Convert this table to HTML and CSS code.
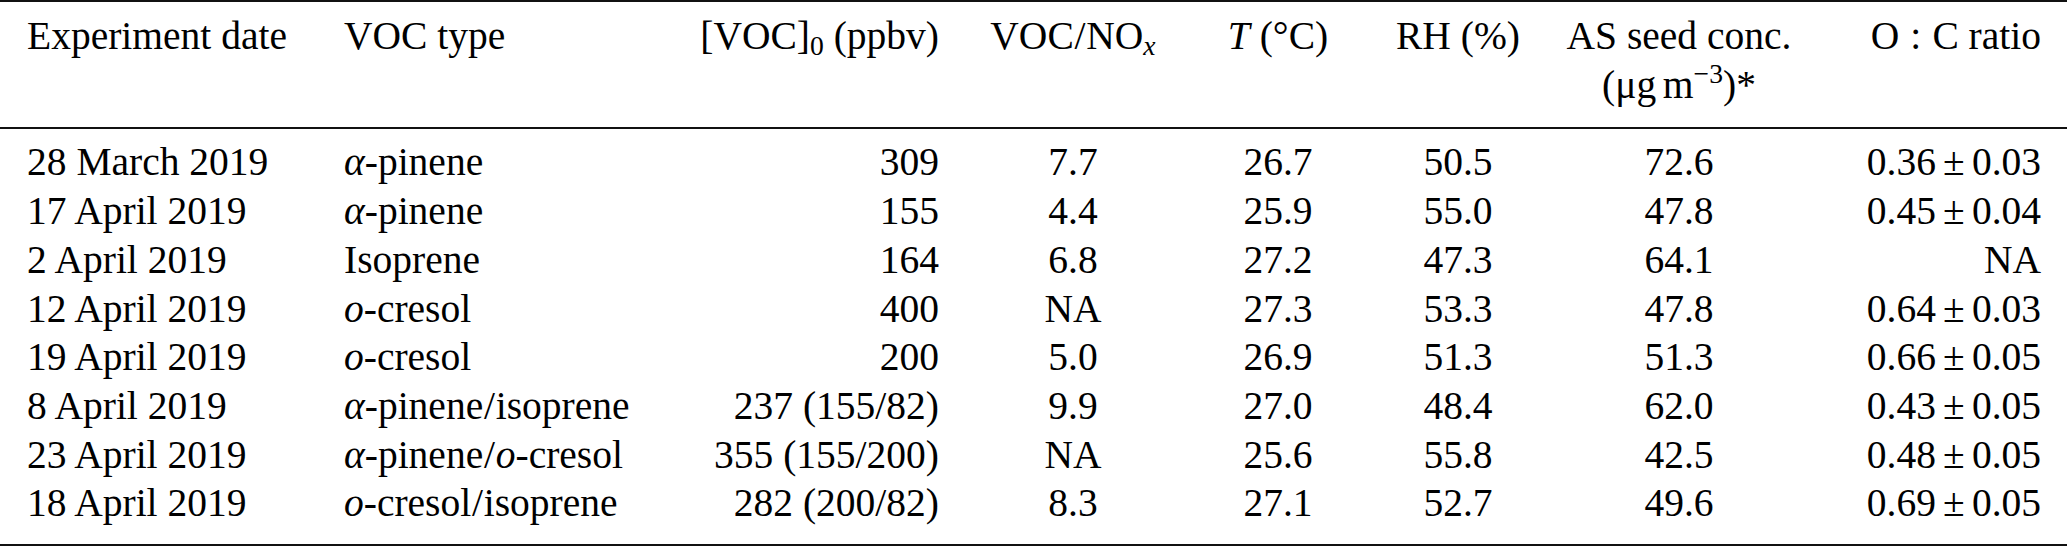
FILE: index.html
```html
<!DOCTYPE html>
<html lang="en">
<head>
<meta charset="utf-8">
<title>Experiment conditions</title>
<link rel="stylesheet" href="styles.css">
</head>
<body>
<table class="exp-table">
  <colgroup>
    <col class="w-date">
    <col class="w-type">
    <col class="w-conc">
    <col class="w-ratio">
    <col class="w-temp">
    <col class="w-rh">
    <col class="w-seed">
    <col class="w-oc">
  </colgroup>
  <thead>
    <tr>
      <th class="left first">Experiment date</th>
      <th class="left second">VOC type</th>
      <th class="right third">[VOC]<sub>0</sub> (ppbv)</th>
      <th class="center">VOC<span class="slash">/</span>NO<sub class="it">x</sub></th>
      <th class="center"><span class="it">T</span> (°C)</th>
      <th class="center">RH (%)</th>
      <th class="center">AS seed conc.<br>(μg<span class="thin"></span>m<sup>−3</sup>)*</th>
      <th class="right last">O<span class="colon">:</span>C ratio</th>
    </tr>
  </thead>
  <tbody>
    <tr>
      <td class="left first">28 March 2019</td>
      <td class="left second"><span class="it">α</span>-pinene</td>
      <td class="right third">309</td>
      <td class="center">7.7</td>
      <td class="center">26.7</td>
      <td class="center">50.5</td>
      <td class="center">72.6</td>
      <td class="right last">0.36<span class="pm">±</span>0.03</td>
    </tr>
    <tr>
      <td class="left first">17 April 2019</td>
      <td class="left second"><span class="it">α</span>-pinene</td>
      <td class="right third">155</td>
      <td class="center">4.4</td>
      <td class="center">25.9</td>
      <td class="center">55.0</td>
      <td class="center">47.8</td>
      <td class="right last">0.45<span class="pm">±</span>0.04</td>
    </tr>
    <tr>
      <td class="left first">2 April 2019</td>
      <td class="left second">Isoprene</td>
      <td class="right third">164</td>
      <td class="center">6.8</td>
      <td class="center">27.2</td>
      <td class="center">47.3</td>
      <td class="center">64.1</td>
      <td class="right last">NA</td>
    </tr>
    <tr>
      <td class="left first">12 April 2019</td>
      <td class="left second"><span class="it">o</span>-cresol</td>
      <td class="right third">400</td>
      <td class="center">NA</td>
      <td class="center">27.3</td>
      <td class="center">53.3</td>
      <td class="center">47.8</td>
      <td class="right last">0.64<span class="pm">±</span>0.03</td>
    </tr>
    <tr>
      <td class="left first">19 April 2019</td>
      <td class="left second"><span class="it">o</span>-cresol</td>
      <td class="right third">200</td>
      <td class="center">5.0</td>
      <td class="center">26.9</td>
      <td class="center">51.3</td>
      <td class="center">51.3</td>
      <td class="right last">0.66<span class="pm">±</span>0.05</td>
    </tr>
    <tr>
      <td class="left first">8 April 2019</td>
      <td class="left second"><span class="it">α</span>-pinene<span class="slash">/</span>isoprene</td>
      <td class="right third">237 (155/82)</td>
      <td class="center">9.9</td>
      <td class="center">27.0</td>
      <td class="center">48.4</td>
      <td class="center">62.0</td>
      <td class="right last">0.43<span class="pm">±</span>0.05</td>
    </tr>
    <tr>
      <td class="left first">23 April 2019</td>
      <td class="left second"><span class="it">α</span>-pinene<span class="slash">/</span><span class="it">o</span>-cresol</td>
      <td class="right third">355 (155/200)</td>
      <td class="center">NA</td>
      <td class="center">25.6</td>
      <td class="center">55.8</td>
      <td class="center">42.5</td>
      <td class="right last">0.48<span class="pm">±</span>0.05</td>
    </tr>
    <tr>
      <td class="left first">18 April 2019</td>
      <td class="left second"><span class="it">o</span>-cresol<span class="slash">/</span>isoprene</td>
      <td class="right third">282 (200/82)</td>
      <td class="center">8.3</td>
      <td class="center">27.1</td>
      <td class="center">52.7</td>
      <td class="center">49.6</td>
      <td class="right last">0.69<span class="pm">±</span>0.05</td>
    </tr>
  </tbody>
</table>
</body>
</html>
```

FILE: styles.css
```css
html, body {
  margin: 0;
  padding: 0;
  background: #ffffff;
}

body {
  font-family: "Liberation Serif", "Times New Roman", serif;
  color: #000000;
}

.exp-table {
  width: 2067px;
  table-layout: fixed;
  border-collapse: collapse;
  font-size: 39.5px;
  line-height: 48.7px;
}

.w-date  { width: 316px; }
.w-type  { width: 354px; }
.w-conc  { width: 296px; }
.w-ratio { width: 214px; }
.w-temp  { width: 196px; }
.w-rh    { width: 164px; }
.w-seed  { width: 278px; }
.w-oc    { width: 249px; }

.exp-table th,
.exp-table td {
  padding: 0;
  font-weight: normal;
  white-space: nowrap;
  vertical-align: top;
}

.exp-table thead th {
  border-top: 2px solid #111;
  border-bottom: 2px solid #111;
  padding-top: 10px;
  padding-bottom: 18px;
}

.exp-table tbody tr:first-child td {
  padding-top: 9px;
}

.exp-table tbody tr:last-child td {
  padding-bottom: 16px;
  border-bottom: 2px solid #111;
}

.left   { text-align: left; }
.right  { text-align: right; }
.center { text-align: center; }

.first  { padding-left: 27px !important; }
.second { padding-left: 28px !important; }
.third  { padding-right: 27px !important; }
.last   { padding-right: 26px !important; }

.it {
  font-style: italic;
}

sub {
  font-size: 0.7em;
  line-height: 0;
  vertical-align: -0.22em;
}

sup {
  font-size: 0.7em;
  line-height: 0;
  vertical-align: 0.55em;
}

.thin {
  display: inline-block;
  width: 0.17em;
}

.colon {
  margin: 0 0.28em;
}

.pm {
  margin: 0 0.18em;
}

.slash {
  margin: 0 0.02em;
}
```
